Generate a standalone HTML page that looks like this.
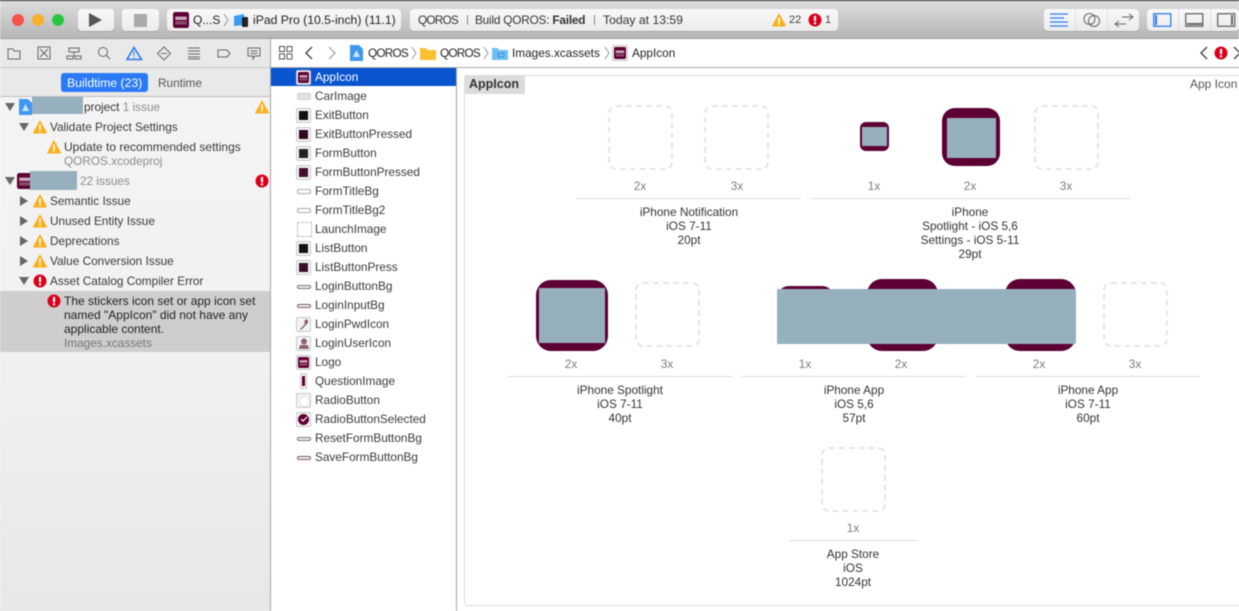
<!DOCTYPE html>
<html><head><meta charset="utf-8"><style>
html,body{margin:0;padding:0;width:1239px;height:611px;overflow:hidden;background:#fff}
body{position:relative;font-family:"Liberation Sans",sans-serif;font-size:11.8px;color:#3a3a3a}
#w{position:absolute;left:0;top:0;width:1239px;height:611px;overflow:hidden;filter:blur(.4px)}
#w div,#w svg{position:absolute}
.t{white-space:nowrap;line-height:14px;transform:translateY(-7px)}
.c{white-space:nowrap;line-height:14px;transform:translate(-50%,-7px);color:#333;text-align:center}
.g{color:#8c8c8c}
.x{color:#7c7c7c}
.q{letter-spacing:-.8px}
.ph{width:61px;height:61px;border:2px dashed #e6e6e6;border-radius:8px}
.ln{height:1px;background:#dcdcdc}
.pic{background:#5d0033}
.gr{background:#96b0bd}
.btn{background:linear-gradient(#f8f8f8,#ececec);border-radius:4px;top:9px;height:22px;box-shadow:0 1px 0 #a4a4a4}
.th{width:15px;height:15px;background:#f4f4f4;border:1px solid #c8c8c8;box-sizing:border-box;border-radius:2px;left:296px}
.ti{background:#5d0033}
.bar{left:297px;width:14px;height:4px;background:#eee;border:1px solid #777;box-sizing:border-box;border-radius:2px}
</style></head><body><div id="w">
<svg width="0" height="0" style="left:0;top:0"><defs>
<symbol id="wn" viewBox="0 0 14 14"><path d="M7 1 L13.5 13 H.5Z" fill="#f7b01e" stroke="#f7b01e" stroke-linejoin="round"/><rect x="6.2" y="4.5" width="1.6" height="5" fill="#fff"/><rect x="6.2" y="10.2" width="1.6" height="1.6" fill="#fff"/></symbol>
<symbol id="er" viewBox="0 0 14 14"><circle cx="7" cy="7" r="6.5" fill="#d9001b"/><rect x="5.9" y="2.8" width="2.2" height="5.6" rx="1" fill="#fff"/><circle cx="7" cy="10.3" r="1.2" fill="#fff"/></symbol>
<symbol id="lg" viewBox="0 0 14 14"><rect width="14" height="14" rx="2" fill="#5d0033"/><rect x="2" y="4" width="10" height="3" fill="#c9a8ba"/><rect x="2" y="8" width="10" height="3" fill="#8a4a6c"/></symbol>
</defs></svg>

<!-- toolbar -->
<div style="left:0;top:0;width:1239px;height:39px;background:linear-gradient(#dedede,#b6b6b6);border-bottom:1px solid #9c9c9c;box-sizing:border-box"></div>
<div style="left:0;top:0;width:1239px;height:1px;background:#222"></div>
<div style="left:12px;top:14px;width:12px;height:12px;border-radius:50%;background:#f5524a"></div>
<div style="left:32px;top:14px;width:12px;height:12px;border-radius:50%;background:#f9b02b"></div>
<div style="left:52px;top:14px;width:12px;height:12px;border-radius:50%;background:#2bc63f"></div>
<div class="btn" style="left:78px;width:36px"></div>
<svg style="left:88px;top:13px" width="15" height="14"><path d="M1 0 L14 7 L1 14Z" fill="#555"/></svg>
<div class="btn" style="left:122px;width:37px"></div>
<div style="left:134px;top:14px;width:13px;height:13px;background:#a9a9a9"></div>
<div class="btn" style="left:167px;width:234px"></div>
<svg style="left:173px;top:12px" width="16" height="16"><use href="#lg"/></svg>
<div class="t" style="left:193px;top:20px;color:#222;font-size:12px">Q...S</div>
<svg style="left:223px;top:13px" width="6" height="14"><path d="M1 1 L5 7 L1 13" fill="none" stroke="#999"/></svg>
<svg style="left:233px;top:13px" width="16" height="15"><path d="M1 3 L11 1 L11 12 L1 13Z" fill="#3a9bf0"/><rect x="9" y="4" width="6" height="10" rx="1" fill="#222"/></svg>
<div class="t" style="left:253px;top:20px;color:#222;font-size:12.2px">iPad Pro (10.5-inch) (11.1)</div>

<div class="btn" style="left:410px;width:428px"></div>
<div class="t q" style="left:418px;top:20px;color:#333">QOROS</div>
<div style="left:467px;top:15px;width:1px;height:10px;background:#888"></div>
<div class="t" style="left:475px;top:20px;color:#333;letter-spacing:-.2px">Build QOROS: <b>Failed</b></div>
<div style="left:594px;top:15px;width:1px;height:10px;background:#888"></div>
<div class="t" style="left:603px;top:20px;color:#333;font-size:12.2px">Today at 13:59</div>
<svg style="left:772px;top:13px" width="14" height="14"><use href="#wn"/></svg>
<div class="t" style="left:789px;top:20px;font-size:11px;color:#444">22</div>
<svg style="left:808px;top:13px" width="14" height="14"><use href="#er"/></svg>
<div class="t" style="left:825px;top:20px;font-size:11px;color:#444">1</div>

<div class="btn" style="left:1044px;width:95px"></div>
<div style="left:1075px;top:9px;width:1px;height:22px;background:#ddd"></div>
<div style="left:1107px;top:9px;width:1px;height:22px;background:#ddd"></div>
<svg style="left:1050px;top:13px" width="19" height="15"><path d="M0 1H18M0 5H14M0 9H18M0 13H18" stroke="#2f7bf0" stroke-width="1.2"/></svg>
<svg style="left:1083px;top:12px" width="18" height="16"><circle cx="6.5" cy="7" r="5.5" fill="none" stroke="#666"/><circle cx="11" cy="9" r="5.5" fill="none" stroke="#666"/></svg>
<svg style="left:1114px;top:13px" width="20" height="15"><path d="M8 4H19M15 1L19 4L15 7M12 11H1M5 8L1 11L5 14" fill="none" stroke="#666"/></svg>
<div class="btn" style="left:1147px;width:92px"></div>
<div style="left:1178px;top:9px;width:1px;height:22px;background:#ddd"></div>
<div style="left:1210px;top:9px;width:1px;height:22px;background:#ddd"></div>
<svg style="left:1153px;top:13px" width="19" height="15"><rect x=".75" y=".75" width="17" height="12.5" fill="none" stroke="#2f7bf0" stroke-width="1.3"/><rect x="2" y="2" width="2" height="10" fill="#2f7bf0"/></svg>
<svg style="left:1185px;top:13px" width="19" height="15"><rect x=".75" y=".75" width="17" height="12.5" fill="none" stroke="#666" stroke-width="1.3"/><rect x="2" y="10" width="15" height="2" fill="#666"/></svg>
<svg style="left:1217px;top:13px" width="19" height="15"><rect x=".75" y=".75" width="17" height="12.5" fill="none" stroke="#666" stroke-width="1.3"/><rect x="14" y="2" width="2" height="10" fill="#666"/></svg>

<!-- navigator -->
<div style="left:0;top:39px;width:271px;height:572px;background:#e9e9e9"></div>
<div style="left:0;top:97px;width:270px;height:514px;background:linear-gradient(#f4f4f4,#f1f1f1 50%,#e8e8e8)"></div>
<div style="left:0;top:67px;width:270px;height:1px;background:#c4c4c4"></div>
<div style="left:0;top:96px;width:270px;height:1px;background:#bfbfbf"></div>
<div style="left:270px;top:39px;width:1px;height:572px;background:#a6a6a6"></div>

<svg style="left:7px;top:46px" width="256" height="15" fill="none" stroke="#666">
<path d="M1 3H6L7 5H13V13H1Z"/>
<rect x="31" y="1" width="12" height="12"/><path d="M33 3L41 11M41 3L33 11"/>
<path d="M62 2H72V6H62ZM60 13V10H66V13ZM68 13V10H74V13ZM67 6V10"/>
<circle cx="96" cy="6" r="4.5"/><path d="M99 9L103 13"/>
<path d="M127 1.5L134.5 13.5H120Z" stroke="#2b7bf2" stroke-width="1.6"/><path d="M127 5V10M127 11V12.5" stroke="#2b7bf2"/>
<path d="M157 1L163.500 7.500L157 14L150.500 7.500ZM154 7.500H160"/>
<path d="M181 2H193M181 5H193M181 8H193M181 11H193M181 13H193" stroke-width=".9"/>
<path d="M211 4H220L223 7.500L220 11H211Z"/>
<path d="M241 2H253V10H248L246 13V10H241ZM243.500 5H250.500M243.500 7.500H250.500"/>
</svg>

<div style="left:61px;top:73px;width:87px;height:19px;background:#2a7af5;border-radius:3px"></div>
<div class="t" style="left:67px;top:83px;color:#fff;font-size:12.2px">Buildtime (23)</div>
<div class="t" style="left:158px;top:83px;color:#555">Runtime</div>

<div style="left:0;top:291px;width:270px;height:61px;background:#cfcdcd"></div>

<!-- issue rows -->
<svg style="left:5px;top:103px" width="10" height="8"><path d="M0 0H10L5 8Z" fill="#666"/></svg>
<svg style="left:19px;top:99px" width="13" height="16"><path d="M0 0H9L13 4V16H0Z" fill="#3f97ee"/><path d="M6.500 5L10 12H3Z" fill="#cfe5fb"/></svg>
<div style="left:32px;top:97px;width:51px;height:17px;background:#96b0bd"></div>
<div class="t" style="left:84px;top:107px;color:#333">project <span class="g">1 issue</span></div>
<svg style="left:255px;top:100px" width="14" height="14"><use href="#wn"/></svg>

<svg style="left:19px;top:123px" width="10" height="8"><path d="M0 0H10L5 8Z" fill="#666"/></svg>
<svg style="left:33px;top:120px" width="14" height="14"><use href="#wn"/></svg>
<div class="t" style="left:50px;top:127px">Validate Project Settings</div>
<svg style="left:47px;top:140px" width="14" height="14"><use href="#wn"/></svg>
<div class="t" style="left:64px;top:147px;font-size:12px">Update to recommended settings</div>
<div class="t g" style="left:64px;top:161px">QOROS.xcodeproj</div>

<svg style="left:5px;top:177px" width="10" height="8"><path d="M0 0H10L5 8Z" fill="#666"/></svg>
<svg style="left:17px;top:173px" width="16" height="16"><use href="#lg"/></svg>
<div style="left:30px;top:171px;width:47px;height:19px;background:#96b0bd"></div>
<div class="t g" style="left:80px;top:181px">22 issues</div>
<svg style="left:255px;top:174px" width="14" height="14"><use href="#er"/></svg>

<svg style="left:20px;top:196px" width="8" height="10"><path d="M0 0V10L8 5Z" fill="#666"/></svg>
<svg style="left:33px;top:194px" width="14" height="14"><use href="#wn"/></svg>
<div class="t" style="left:50px;top:201px">Semantic Issue</div>
<svg style="left:20px;top:216px" width="8" height="10"><path d="M0 0V10L8 5Z" fill="#666"/></svg>
<svg style="left:33px;top:214px" width="14" height="14"><use href="#wn"/></svg>
<div class="t" style="left:50px;top:221px">Unused Entity Issue</div>
<svg style="left:20px;top:236px" width="8" height="10"><path d="M0 0V10L8 5Z" fill="#666"/></svg>
<svg style="left:33px;top:234px" width="14" height="14"><use href="#wn"/></svg>
<div class="t" style="left:50px;top:241px">Deprecations</div>
<svg style="left:20px;top:256px" width="8" height="10"><path d="M0 0V10L8 5Z" fill="#666"/></svg>
<svg style="left:33px;top:254px" width="14" height="14"><use href="#wn"/></svg>
<div class="t" style="left:50px;top:261px">Value Conversion Issue</div>
<svg style="left:19px;top:277px" width="10" height="8"><path d="M0 0H10L5 8Z" fill="#666"/></svg>
<svg style="left:33px;top:274px" width="14" height="14"><use href="#er"/></svg>
<div class="t" style="left:50px;top:281px">Asset Catalog Compiler Error</div>
<svg style="left:47px;top:294px" width="14" height="14"><use href="#er"/></svg>
<div class="t" style="left:64px;top:301px;color:#222;font-size:12px">The stickers icon set or app icon set</div>
<div class="t" style="left:64px;top:315px;color:#222;font-size:12px">named "AppIcon" did not have any</div>
<div class="t" style="left:64px;top:329px;color:#222;font-size:12px">applicable content.</div>
<div class="t" style="left:64px;top:343px;color:#777">Images.xcassets</div>

<!-- path bar -->
<div style="left:271px;top:67px;width:968px;height:1px;background:#aaa"></div>
<svg style="left:279px;top:46px" width="14" height="14" fill="none" stroke="#555"><rect x=".5" y=".5" width="5" height="5"/><rect x="8" y=".5" width="5" height="5"/><rect x=".5" y="8" width="5" height="5"/><rect x="8" y="8" width="5" height="5"/></svg>
<svg style="left:305px;top:46px" width="8" height="14"><path d="M7 1L1 7L7 13" fill="none" stroke="#444" stroke-width="1.4"/></svg>
<svg style="left:328px;top:46px" width="8" height="14"><path d="M1 1L7 7L1 13" fill="none" stroke="#aaa" stroke-width="1.4"/></svg>
<svg style="left:350px;top:45px" width="13" height="16"><path d="M0 0H9L13 4V16H0Z" fill="#3f97ee"/><path d="M6.500 5L10 12H3Z" fill="#cfe5fb"/></svg>
<div class="t q" style="left:368px;top:53px;color:#222">QOROS</div>
<svg style="left:411px;top:46px" width="6" height="14"><path d="M1 1L5 7L1 13" fill="none" stroke="#999"/></svg>
<svg style="left:420px;top:47px" width="16" height="13"><path d="M0 1H6L7 3H16V13H0Z" fill="#fbc02d"/></svg>
<div class="t q" style="left:440px;top:53px;color:#222">QOROS</div>
<svg style="left:483px;top:46px" width="6" height="14"><path d="M1 1L5 7L1 13" fill="none" stroke="#999"/></svg>
<svg style="left:492px;top:47px" width="16" height="13"><path d="M0 1H6L7 3H16V13H0Z" fill="#6cc0f5"/><rect x="6" y="6" width="6" height="4" fill="none" stroke="#3f97d8"/></svg>
<div class="t" style="left:512px;top:53px;color:#222">Images.xcassets</div>
<svg style="left:604px;top:46px" width="6" height="14"><path d="M1 1L5 7L1 13" fill="none" stroke="#999"/></svg>
<div style="left:612px;top:45px;width:16px;height:16px;background:#eee;border:1px solid #ccc;box-sizing:border-box;border-radius:2px"></div>
<svg style="left:614px;top:47px" width="12" height="12"><use href="#lg"/></svg>
<div class="t" style="left:632px;top:53px;color:#222">AppIcon</div>
<svg style="left:1200px;top:46px" width="8" height="14"><path d="M7 1L1 7L7 13" fill="none" stroke="#444" stroke-width="1.4"/></svg>
<svg style="left:1214px;top:46px" width="14" height="14"><use href="#er"/></svg>
<svg style="left:1233px;top:46px" width="8" height="14"><path d="M1 1L7 7L1 13" fill="none" stroke="#444" stroke-width="1.4"/></svg>

<!-- file list -->
<div style="left:271px;top:68px;width:185px;height:18px;background:#0a54cf"></div>
<div style="left:456px;top:68px;width:1px;height:543px;background:#a6a6a6"></div>

<div class="th" style="top:70px"></div><svg style="left:298px;top:72px" width="11" height="11"><use href="#lg"/></svg>
<div class="t" style="left:315px;top:77px;color:#fff">AppIcon</div>
<div class="bar" style="top:93px;height:7px;background:#e2e2e2;border-color:#ccc"></div>
<div class="t" style="left:315px;top:96px">CarImage</div>
<div class="th" style="top:108px"></div><div class="ti" style="left:299px;top:111px;width:9px;height:9px;background:#111"></div>
<div class="t" style="left:315px;top:115px">ExitButton</div>
<div class="th" style="top:127px"></div><div class="ti" style="left:299px;top:130px;width:9px;height:9px;background:#2e0a22"></div>
<div class="t" style="left:315px;top:134px">ExitButtonPressed</div>
<div class="th" style="top:146px"></div><div class="ti" style="left:299px;top:149px;width:9px;height:9px;background:#222"></div>
<div class="t" style="left:315px;top:153px">FormButton</div>
<div class="th" style="top:165px"></div><div class="ti" style="left:299px;top:168px;width:9px;height:9px;background:#44102f"></div>
<div class="t" style="left:315px;top:172px">FormButtonPressed</div>
<div class="bar" style="top:189px;height:5px;background:#fff;border-color:#aaa"></div>
<div class="t" style="left:315px;top:191px">FormTitleBg</div>
<div class="bar" style="top:208px;height:5px;background:#fff;border-color:#aaa"></div>
<div class="t" style="left:315px;top:210px">FormTitleBg2</div>
<div style="left:297px;top:222px;width:13px;height:13px;border:1px dashed #bbb"></div>
<div class="t" style="left:315px;top:229px">LaunchImage</div>
<div class="th" style="top:241px"></div><div class="ti" style="left:299px;top:244px;width:9px;height:9px;background:#111"></div>
<div class="t" style="left:315px;top:248px">ListButton</div>
<div class="th" style="top:260px"></div><div class="ti" style="left:299px;top:263px;width:9px;height:9px;background:#35102a"></div>
<div class="t" style="left:315px;top:267px">ListButtonPress</div>
<div class="bar" style="top:285px"></div>
<div class="t" style="left:315px;top:286px">LoginButtonBg</div>
<div class="bar" style="top:304px;border-color:#7a5a70"></div>
<div class="t" style="left:315px;top:305px">LoginInputBg</div>
<div class="th" style="top:317px"></div><svg style="left:299px;top:319px" width="10" height="11"><path d="M9 1L7 0L5 3L6 5L1 10L2 11L7 6L9 4Z" fill="#8d5f7b"/></svg>
<div class="t" style="left:315px;top:324px">LoginPwdIcon</div>
<div class="th" style="top:336px"></div><svg style="left:298px;top:338px" width="12" height="11"><circle cx="6" cy="3.500" r="3" fill="#8d5f7b"/><path d="M1 11L2 7H10L11 11Z" fill="#8d5f7b"/></svg>
<div class="t" style="left:315px;top:343px">LoginUserIcon</div>
<div class="th" style="top:355px"></div><svg style="left:298px;top:357px" width="11" height="11"><use href="#lg"/></svg>
<div class="t" style="left:315px;top:362px">Logo</div>
<div style="left:300px;top:373px;width:7px;height:16px;background:#f4f4f4;border:1px solid #ccc;box-sizing:border-box"></div><div style="left:302px;top:376px;width:3px;height:10px;background:#5d0033"></div>
<div class="t" style="left:315px;top:381px">QuestionImage</div>
<div class="th" style="top:393px"></div><div style="left:299px;top:396px;width:9px;height:9px;border-radius:50%;background:#fff;border:1px solid #e4e4e4"></div>
<div class="t" style="left:315px;top:400px">RadioButton</div>
<div class="th" style="top:412px"></div><div style="left:298px;top:414px;width:11px;height:11px;border-radius:50%;background:#5d0033"></div><svg style="left:300px;top:416px" width="8" height="7"><path d="M1 3L3 5L7 1" fill="none" stroke="#fff" stroke-width="1.200"/></svg>
<div class="t" style="left:315px;top:419px">RadioButtonSelected</div>
<div class="bar" style="top:437px"></div>
<div class="t" style="left:315px;top:438px">ResetFormButtonBg</div>
<div class="bar" style="top:456px;border-color:#7a5a70"></div>
<div class="t" style="left:315px;top:457px">SaveFormButtonBg</div>

<!-- main panel -->
<div style="left:464px;top:75px;width:790px;height:531px;border:1px solid #dcdcdc;box-sizing:border-box;border-radius:3px"></div>
<div style="left:465px;top:75px;width:60px;height:19px;background:#dcdcdc"></div>
<div class="t" style="left:469px;top:84px;color:#333;font-weight:bold;font-size:12.5px">AppIcon</div>
<div class="t" style="left:1190px;top:84px;color:#555;font-size:12px">App Icon</div>

<div class="ph" style="left:608px;top:105px"></div>
<div class="ph" style="left:704px;top:105px"></div>
<div class="pic" style="left:860px;top:122px;width:29px;height:29px;border-radius:6px"></div>
<div class="gr" style="left:862px;top:127px;width:25px;height:19px"></div>
<div class="pic" style="left:942px;top:108px;width:58px;height:58px;border-radius:13px"></div>
<div class="gr" style="left:947px;top:118px;width:49px;height:40px"></div>
<div class="ph" style="left:1034px;top:105px"></div>
<div class="c x" style="left:640px;top:186px">2x</div>
<div class="c x" style="left:737px;top:186px">3x</div>
<div class="c x" style="left:874px;top:186px">1x</div>
<div class="c x" style="left:970px;top:186px">2x</div>
<div class="c x" style="left:1066px;top:186px">3x</div>
<div class="ln" style="left:577px;top:198px;width:224px"></div>
<div class="ln" style="left:811px;top:198px;width:320px"></div>
<div class="c" style="left:689px;top:212px">iPhone Notification</div>
<div class="c" style="left:689px;top:226px">iOS 7-11</div>
<div class="c" style="left:689px;top:240px">20pt</div>
<div class="c" style="left:970px;top:212px">iPhone</div>
<div class="c" style="left:970px;top:226px">Spotlight - iOS 5,6</div>
<div class="c" style="left:970px;top:240px">Settings - iOS 5-11</div>
<div class="c" style="left:970px;top:254px">29pt</div>

<div class="pic" style="left:536px;top:280px;width:72px;height:71px;border-radius:15px"></div>
<div class="gr" style="left:539px;top:288px;width:66px;height:55px"></div>
<div class="ph" style="left:635px;top:282px"></div>
<div class="pic" style="left:777px;top:286px;width:57px;height:58px;border-radius:12px"></div>
<div class="pic" style="left:867px;top:279px;width:71px;height:72px;border-radius:15px"></div>
<div class="pic" style="left:1005px;top:279px;width:71px;height:72px;border-radius:15px"></div>
<div class="gr" style="left:777px;top:289px;width:299px;height:54.500px;border-radius:0 2px 2px 0"></div>
<div class="ph" style="left:1103px;top:282px"></div>
<div class="c x" style="left:571px;top:364px">2x</div>
<div class="c x" style="left:667px;top:364px">3x</div>
<div class="c x" style="left:805px;top:364px">1x</div>
<div class="c x" style="left:901px;top:364px">2x</div>
<div class="c x" style="left:1039px;top:364px">2x</div>
<div class="c x" style="left:1135px;top:364px">3x</div>
<div class="ln" style="left:508px;top:376px;width:224px"></div>
<div class="ln" style="left:742px;top:376px;width:224px"></div>
<div class="ln" style="left:976px;top:376px;width:224px"></div>
<div class="c" style="left:620px;top:390px">iPhone Spotlight</div>
<div class="c" style="left:620px;top:404px">iOS 7-11</div>
<div class="c" style="left:620px;top:418px">40pt</div>
<div class="c" style="left:854px;top:390px">iPhone App</div>
<div class="c" style="left:854px;top:404px">iOS 5,6</div>
<div class="c" style="left:854px;top:418px">57pt</div>
<div class="c" style="left:1088px;top:390px">iPhone App</div>
<div class="c" style="left:1088px;top:404px">iOS 7-11</div>
<div class="c" style="left:1088px;top:418px">60pt</div>

<div class="ph" style="left:821px;top:447px"></div>
<div class="c x" style="left:853px;top:528px">1x</div>
<div class="ln" style="left:789px;top:540px;width:129px"></div>
<div class="c" style="left:853px;top:554px">App Store</div>
<div class="c" style="left:853px;top:568px">iOS</div>
<div class="c" style="left:853px;top:582px">1024pt</div>
</div></body></html>
